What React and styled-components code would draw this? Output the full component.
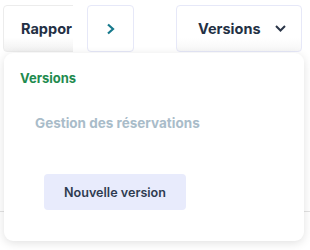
import React from "react";
import styled, { createGlobalStyle } from "styled-components";

const GlobalStyle = createGlobalStyle`
  body {
    margin: 0;
    background: #ffffff;
    font-family: Inter, "Open Sans", sans-serif;
  }
`;

const Page = styled.div`
  position: relative;
  width: 310px;
  height: 250px;
  overflow: hidden;
`;

const Toolbar = styled.div`
  display: flex;
  align-items: flex-start;
  padding: 5px 8px 0 3px;
  height: 48px;
`;

const TabsClip = styled.div`
  width: 70px;
  overflow: hidden;
  flex-shrink: 0;
`;

const Tab = styled.div`
  width: 110px;
  height: 47px;
  box-sizing: border-box;
  display: flex;
  align-items: center;
  padding-left: 17px;
  background: linear-gradient(#ffffff 70%, #f1f1f1);
  border: 1px solid #ececec;
  border-radius: 4px 0 0 4px;
  font-size: 14.5px;
  font-weight: 700;
  color: #233044;
  white-space: nowrap;
`;

const IconButton = styled.button`
  margin-left: 14px;
  width: 47px;
  height: 47px;
  box-sizing: border-box;
  display: flex;
  align-items: center;
  justify-content: center;
  background: #ffffff;
  border: 1px solid #e6e8f8;
  border-radius: 4px;
  padding: 0;
`;

const SelectButton = styled.button`
  margin-left: auto;
  width: 126px;
  height: 47px;
  box-sizing: border-box;
  display: flex;
  align-items: center;
  justify-content: space-between;
  padding: 0 15px 0 21px;
  background: linear-gradient(#ffffff 70%, #f7f7f7);
  border: 1px solid #e6e8f8;
  border-radius: 4px;
  font-family: inherit;
  font-size: 14.5px;
  font-weight: 700;
  color: #233044;
`;

const Divider = styled.div`
  margin-top: 158px;
  height: 1px;
  background: #e2e2e2;
`;

const Dropdown = styled.div`
  position: absolute;
  left: 4px;
  top: 53px;
  width: 300px;
  height: 188px;
  box-sizing: border-box;
  background: #ffffff;
  border-radius: 9px;
  box-shadow: 0 2px 10px rgba(0, 0, 0, 0.12);
  padding: 15px 16px;
  display: flex;
  flex-direction: column;
  align-items: flex-start;
`;

const Heading = styled.div`
  font-size: 13px;
  font-weight: 700;
  color: #1f8b4f;
  line-height: 18px;
  margin-top: 1px;
`;

const Item = styled.div`
  margin: 27px 0 0 15px;
  font-size: 13.5px;
  font-weight: 700;
  color: #a9bcc9;
  line-height: 18px;
`;

const PrimaryButton = styled.button`
  margin: 42px 0 0 24px;
  width: 142px;
  height: 36px;
  background: #e8ebfc;
  border: none;
  border-radius: 4px;
  font-family: inherit;
  font-size: 12.6px;
  font-weight: 600;
  color: #2f3b50;
`;

const ChevronRight = () => (
  <svg width="10" height="12" viewBox="0 0 10 12" fill="none">
    <path d="M2 1.5 L7 6 L2 10.5" stroke="#16798c" strokeWidth="2.2" />
  </svg>
);

const ChevronDown = () => (
  <svg width="11" height="7" viewBox="0 0 11 7" fill="none">
    <path d="M1 1 L5.5 5.5 L10 1" stroke="#2b3648" strokeWidth="2" />
  </svg>
);

const App = () => {
  return (
    <Page>
      <GlobalStyle />
      <Toolbar>
        <TabsClip>
          <Tab>Rappor</Tab>
        </TabsClip>
        <IconButton>
          <ChevronRight />
        </IconButton>
        <SelectButton>
          Versions
          <ChevronDown />
        </SelectButton>
      </Toolbar>
      <Divider />
      <Dropdown>
        <Heading>Versions</Heading>
        <Item>Gestion des réservations</Item>
        <PrimaryButton>Nouvelle version</PrimaryButton>
      </Dropdown>
    </Page>
  );
};

export default App;
